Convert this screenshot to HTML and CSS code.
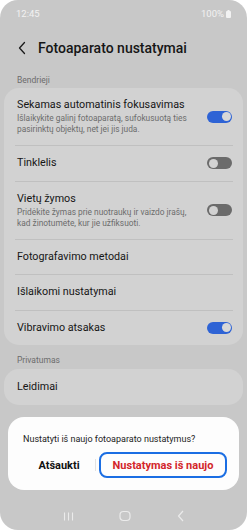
FILE: index.html
```html
<!DOCTYPE html>
<html lang="lt">
<head>
<meta charset="utf-8">
<link rel="stylesheet" href="styles.css">
</head>
<body>
<div class="screen">
  <div class="status">
    <span>12:45</span>
    <span class="bat">100%<svg width="5" height="8" viewBox="0 0 5 8"><rect x="1.5" y="0" width="2" height="1" fill="#f2f2f2"/><rect x="0" y="1" width="5" height="7" rx="1" fill="#f2f2f2"/></svg></span>
  </div>
  <div class="header">
    <svg class="back" width="10" height="14" viewBox="0 0 10 14"><path d="M7.5 1.5 L2.5 7 L7.5 12.5" fill="none" stroke="#1b1b1b" stroke-width="1.3" stroke-linecap="round" stroke-linejoin="round"/></svg>
    <span class="title">Fotoaparato nustatymai</span>
  </div>
  <div class="section">Bendrieji</div>
  <div class="card">
    <div class="row multi">
      <div class="txt">
        <div class="t">Sekamas automatinis fokusavimas</div>
        <div class="s">Išlaikykite galinį fotoaparatą, sufokusuotą ties pasirinktų objektų, net jei jis juda.</div>
      </div>
      <span class="tog on"></span>
    </div>
    <div class="div"></div>
    <div class="row">
      <div class="txt"><div class="t">Tinklelis</div></div>
      <span class="tog"></span>
    </div>
    <div class="div"></div>
    <div class="row multi">
      <div class="txt">
        <div class="t">Vietų žymos</div>
        <div class="s">Pridėkite žymas prie nuotraukų ir vaizdo įrašų, kad žinotumėte, kur jie užfiksuoti.</div>
      </div>
      <span class="tog"></span>
    </div>
    <div class="div"></div>
    <div class="row"><div class="txt"><div class="t">Fotografavimo metodai</div></div></div>
    <div class="div"></div>
    <div class="row"><div class="txt"><div class="t">Išlaikomi nustatymai</div></div></div>
    <div class="div"></div>
    <div class="row">
      <div class="txt"><div class="t">Vibravimo atsakas</div></div>
      <span class="tog on"></span>
    </div>
  </div>
  <div class="section priv">Privatumas</div>
  <div class="card">
    <div class="row last"><div class="txt"><div class="t">Leidimai</div></div></div>
  </div>
  <div class="dialog">
    <div class="q">Nustatyti iš naujo fotoaparato nustatymus?</div>
    <div class="btns">
      <span class="cancel">Atšaukti</span>
      <span class="sep"></span>
      <span class="reset">Nustatymas iš naujo</span>
    </div>
  </div>
  <div class="nav">
    <svg width="11" height="9" viewBox="0 0 11 9"><path d="M1.5 0.5V8.5M5.5 0.5V8.5M9.5 0.5V8.5" stroke="#ebebeb" stroke-width="1.1"/></svg>
    <svg width="12" height="12" viewBox="0 0 12 12"><rect x="1" y="1.5" width="10" height="9" rx="3.5" fill="none" stroke="#ebebeb" stroke-width="1.2"/></svg>
    <svg width="8" height="12" viewBox="0 0 8 12"><path d="M6 1 L1.5 6 L6 11" fill="none" stroke="#ebebeb" stroke-width="1.2"/></svg>
  </div>
</div>
</body>
</html>
```
FILE: styles.css
```css
* { box-sizing: border-box; }
html, body { margin: 0; padding: 0; background: #ffffff; }
body { width: 247px; height: 530px; overflow: hidden; font-family: Roboto, "Noto Sans", sans-serif; }
.screen {
  width: 247px; height: 530px; background: #c8c8c8; border-radius: 18px;
  overflow: hidden; display: flex; flex-direction: column; padding: 0 4px;
}
.status {
  flex: none; height: 27px; display: flex; justify-content: space-between; align-items: center;
  color: #f2f2f2; font-size: 9.5px; padding: 0 12px 0 12px;
}
.bat { display: flex; align-items: center; gap: 2px; }
.header { flex: none; height: 42px; display: flex; align-items: center; padding-left: 13px; gap: 11px; }
.back { margin-top: -1px; }
.title { font-size: 14px; font-weight: 500; color: #161616; }
.section { flex: none; font-size: 8.5px; color: #6c6c6c; padding: 6px 13px 0; height: 19px; }
.section.priv { height: 24px; padding-top: 10px; }
.card { flex: none; background: #d2d2d2; border-radius: 15px; padding: 0 11px 0 13px; }
.row { display: flex; align-items: center; min-height: 34.5px; gap: 12px; }
.row.last { min-height: 36px; }
.row.multi { padding: 10px 0 10px; }
.txt { flex: 1; min-width: 0; }
.t { font-size: 10.75px; color: #161616; line-height: 14px; }
.s { font-size: 8.35px; color: #6c6c6c; line-height: 11px; margin-top: 1px; }
.div { height: 1px; background: #c0c0c0; margin: 0 -1px 0 -2px; }
.tog {
  flex: none; width: 25px; height: 12px; border-radius: 6px; background: #6b6b6b; position: relative;
}
.tog::after {
  content: ""; position: absolute; left: 1.5px; top: 1.5px; width: 9px; height: 9px; border-radius: 50%;
  background: #d2d2d2;
}
.tog.on { background: #2e63d5; }
.tog.on::after { left: auto; right: 1.5px; background: #d8d8d8; }
.dialog {
  flex: none; margin: 12px 4px 0; background: #fdfdfd; border-radius: 16px; padding: 17px 12px 12px 15px; height: 73px;
}
.q { font-size: 9px; color: #222; line-height: 11px; }
.btns { display: flex; align-items: center; margin-top: 7px; }
.cancel { width: 72px; text-align: center; font-size: 11px; font-weight: 700; color: #111; }
.sep { width: 1px; height: 12px; background: #e2e2e2; margin: 0 3px 0 0; }
.reset {
  flex: none; width: 128px; height: 26px; border: 2px solid #1b6ee3; border-radius: 8px;
  display: flex; align-items: center; justify-content: center;
  font-size: 11px; font-weight: 700; color: #d3262a;
}
.nav { flex: 1; display: flex; justify-content: space-around; align-items: center; padding: 12px 35px 0 36px; }
```
